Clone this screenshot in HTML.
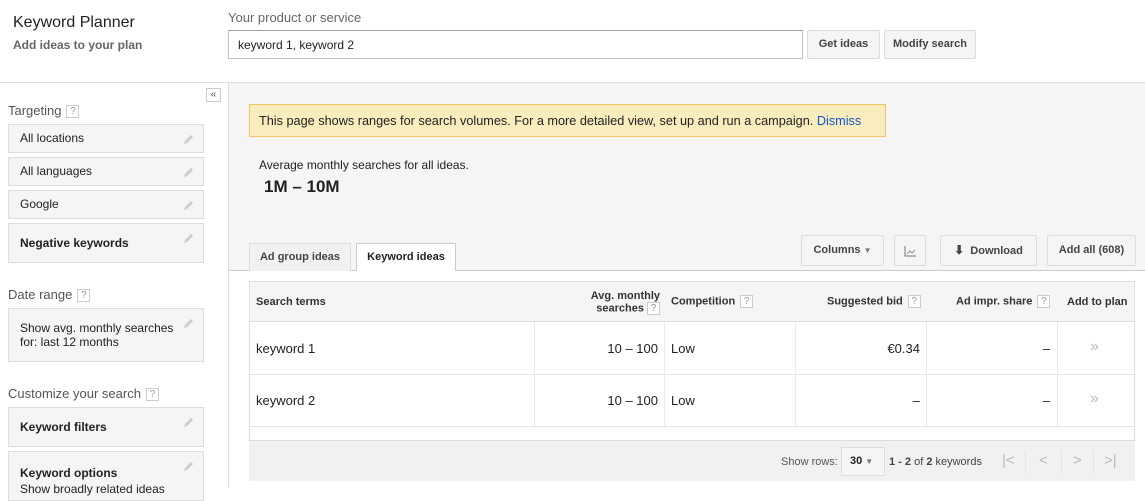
<!DOCTYPE html>
<html><head><style>
*{margin:0;padding:0;box-sizing:border-box}
body{width:1145px;height:488px;overflow:hidden;font-family:"Liberation Sans",Arial,sans-serif;font-size:12px;color:#222;background:#fff;position:relative}
.a{position:absolute}
.box{position:absolute;left:8px;width:196px;background:#f5f5f5;border:1px solid #ddd;padding-left:11px;font-size:12px}
.pen{position:absolute;right:8px;top:8px;width:12px;height:12px}
.q{display:inline-block;width:13px;height:13px;border:1px solid #ccc;font-size:10px;color:#999;text-align:center;line-height:11px;background:#fff;vertical-align:middle;margin-left:5px;font-weight:normal}
.btn{position:absolute;height:31px;background:#f5f5f5;border:1px solid #dcdcdc;border-radius:2px;font-weight:bold;font-size:11px;color:#444;text-align:center;line-height:29px}
.th{position:absolute;font-weight:bold;font-size:11px;color:#333}
.vl{position:absolute;width:1px;background:#ebebeb}
</style></head><body>
<div class="a" style="left:13px;top:14px;font-size:16px;color:#222">Keyword Planner</div>
<div class="a" style="left:13px;top:38px;font-size:12px;font-weight:bold;color:#666">Add ideas to your plan</div>
<div class="a" style="left:228px;top:10px;font-size:13px;color:#666">Your product or service</div>
<div class="a" style="left:228px;top:30px;width:575px;height:29px;border:1px solid #c0c0c0;border-top-color:#a0a0a0;padding:7px 9px;font-size:12px">keyword 1, keyword 2</div>
<div class="btn" style="left:807px;top:30px;width:73px;height:29px;line-height:27px">Get ideas</div>
<div class="btn" style="left:884px;top:30px;width:92px;height:29px;line-height:27px">Modify search</div>
<div class="a" style="left:0;top:82px;width:1145px;height:1px;background:#ddd"></div>
<div class="a" style="left:228px;top:83px;width:1px;height:405px;background:#ddd"></div>
<div class="a" style="left:229px;top:83px;width:916px;height:187px;background:#f5f5f5"></div>
<div class="a" style="left:229px;top:270px;width:916px;height:1px;background:#ccc"></div>
<div class="a" style="left:206px;top:88px;width:15px;height:14px;border:1px solid #ccc;background:#fff;font-size:10px;line-height:11px;text-align:center;color:#555">«</div>
<div class="a" style="left:8px;top:103px;color:#555;font-size:13px">Targeting<span class="q">?</span></div>
<div class="box" style="top:124px;height:29px;line-height:27px">All locations<svg class="pen" viewBox="0 0 12 12"><path d="M1 11l1-3 6-6 2 2-6 6z" fill="#ccc"/></svg></div>
<div class="box" style="top:157px;height:29px;line-height:27px">All languages<svg class="pen" viewBox="0 0 12 12"><path d="M1 11l1-3 6-6 2 2-6 6z" fill="#ccc"/></svg></div>
<div class="box" style="top:190px;height:29px;line-height:27px">Google<svg class="pen" viewBox="0 0 12 12"><path d="M1 11l1-3 6-6 2 2-6 6z" fill="#ccc"/></svg></div>
<div class="box" style="top:223px;height:40px;line-height:38px;font-weight:bold">Negative keywords<svg class="pen" viewBox="0 0 12 12"><path d="M1 11l1-3 6-6 2 2-6 6z" fill="#ccc"/></svg></div>
<div class="a" style="left:8px;top:287px;color:#555;font-size:13px">Date range<span class="q">?</span></div>
<div class="box" style="top:308px;height:54px;padding-top:12px;line-height:14px">Show avg. monthly searches<br>for: last 12 months<svg class="pen" viewBox="0 0 12 12"><path d="M1 11l1-3 6-6 2 2-6 6z" fill="#ccc"/></svg></div>
<div class="a" style="left:8px;top:386px;color:#555;font-size:13px">Customize your search<span class="q">?</span></div>
<div class="box" style="top:407px;height:40px;line-height:38px;font-weight:bold">Keyword filters<svg class="pen" viewBox="0 0 12 12"><path d="M1 11l1-3 6-6 2 2-6 6z" fill="#ccc"/></svg></div>
<div class="box" style="top:451px;height:50px;padding-top:13px;line-height:16px"><b>Keyword options</b><br>Show broadly related ideas<svg class="pen" viewBox="0 0 12 12"><path d="M1 11l1-3 6-6 2 2-6 6z" fill="#ccc"/></svg></div>

<div class="a" style="left:249px;top:104px;width:637px;height:33px;background:#f9edbe;border:1px solid #f0c36d;padding:9px;font-size:12.7px;white-space:nowrap">This page shows ranges for search volumes. For a more detailed view, set up and run a campaign. <span style="color:#15c">Dismiss</span></div>
<div class="a" style="left:259px;top:158px;font-size:12px">Average monthly searches for all ideas.</div>
<div class="a" style="left:264px;top:177px;font-size:17px;font-weight:bold">1M – 10M</div>

<div class="a" style="left:249px;top:243px;width:102px;height:28px;background:#f1f1f1;border:1px solid #ddd;border-bottom:none;font-weight:bold;font-size:11px;color:#444;text-align:center;line-height:27px">Ad group ideas</div>
<div class="a" style="left:356px;top:243px;width:100px;height:28px;background:#fff;border:1px solid #ccc;border-bottom:none;font-weight:bold;font-size:11px;color:#222;text-align:center;line-height:27px">Keyword ideas</div>
<div class="btn" style="left:801px;top:235px;width:83px">Columns <span style="font-size:8px;color:#777">▼</span></div>
<div class="btn" style="left:894px;top:235px;width:32px"><svg width="12" height="11" viewBox="0 0 12 11" style="margin-top:10px"><path d="M1 0v10h11" stroke="#777" fill="none"/><path d="M3 8l3-3 2 2 3-3" stroke="#999" fill="none"/></svg></div>
<div class="btn" style="left:940px;top:235px;width:97px"><span style="font-size:12px">⬇</span>&nbsp; Download</div>
<div class="btn" style="left:1047px;top:235px;width:89px">Add all (608)</div>

<div class="a" style="left:249px;top:281px;width:886px;height:160px;border:1px solid #ddd"></div>
<div class="a" style="left:250px;top:282px;width:884px;height:40px;background:#f5f5f5;border-bottom:1px solid #ddd"></div>
<div class="th" style="left:256px;top:296px">Search terms</div>
<div class="th" style="left:560px;top:290px;text-align:right;width:100px;line-height:12px">Avg. monthly<br>searches<span class="q" style="margin-left:3px">?</span></div>
<div class="th" style="left:671px;top:295px">Competition<span class="q">?</span></div>
<div class="th" style="left:827px;top:295px">Suggested bid<span class="q">?</span></div>
<div class="th" style="left:956px;top:295px">Ad impr. share<span class="q">?</span></div>
<div class="th" style="left:1067px;top:296px">Add to plan</div>
<div class="a" style="left:250px;top:374px;width:884px;height:1px;background:#e5e5e5"></div>
<div class="a" style="left:250px;top:426px;width:884px;height:1px;background:#e5e5e5"></div>
<div class="vl" style="left:534px;top:322px;height:104px"></div>
<div class="vl" style="left:664px;top:322px;height:104px"></div>
<div class="vl" style="left:795px;top:322px;height:104px"></div>
<div class="vl" style="left:926px;top:322px;height:104px"></div>
<div class="vl" style="left:1057px;top:322px;height:104px"></div>
<div class="a" style="left:256px;top:341px;font-size:13px">keyword 1</div>
<div class="a" style="left:560px;top:341px;width:98px;text-align:right;font-size:13px">10 – 100</div>
<div class="a" style="left:671px;top:341px;font-size:13px">Low</div>
<div class="a" style="left:800px;top:341px;width:120px;text-align:right;font-size:13px">€0.34</div>
<div class="a" style="left:930px;top:341px;width:120px;text-align:right;font-size:13px">–</div>
<div class="a" style="left:1090px;top:338px;color:#bbb;font-size:16px">»</div>
<div class="a" style="left:256px;top:393px;font-size:13px">keyword 2</div>
<div class="a" style="left:560px;top:393px;width:98px;text-align:right;font-size:13px">10 – 100</div>
<div class="a" style="left:671px;top:393px;font-size:13px">Low</div>
<div class="a" style="left:800px;top:393px;width:120px;text-align:right;font-size:13px">–</div>
<div class="a" style="left:930px;top:393px;width:120px;text-align:right;font-size:13px">–</div>
<div class="a" style="left:1090px;top:390px;color:#bbb;font-size:16px">»</div>

<div class="a" style="left:249px;top:441px;width:886px;height:40px;background:#f1f1f1"></div>
<div class="a" style="left:781px;top:456px;font-size:11px;color:#555">Show rows:</div>
<div class="a" style="left:841px;top:447px;width:44px;height:29px;border:1px solid #ddd;background:#f5f5f5;font-size:11px;font-weight:bold;line-height:27px;padding-left:8px">30 <span style="font-size:8px;color:#777">▼</span></div>
<div class="a" style="left:889px;top:456px;font-size:11px;color:#444"><b>1 - 2</b> of <b>2</b> keywords</div>
<div class="a" style="left:1002px;top:452px;font-size:15px;color:#bbb">|&lt;</div>
<div class="a" style="left:1039px;top:452px;font-size:15px;color:#bbb">&lt;</div>
<div class="a" style="left:1073px;top:452px;font-size:15px;color:#bbb">&gt;</div>
<div class="a" style="left:1104px;top:452px;font-size:15px;color:#bbb">&gt;|</div>
<div class="vl" style="left:1025px;top:450px;height:24px;background:#e3e3e3"></div>
<div class="vl" style="left:1061px;top:450px;height:24px;background:#e3e3e3"></div>
<div class="vl" style="left:1093px;top:450px;height:24px;background:#e3e3e3"></div>
</body></html>
